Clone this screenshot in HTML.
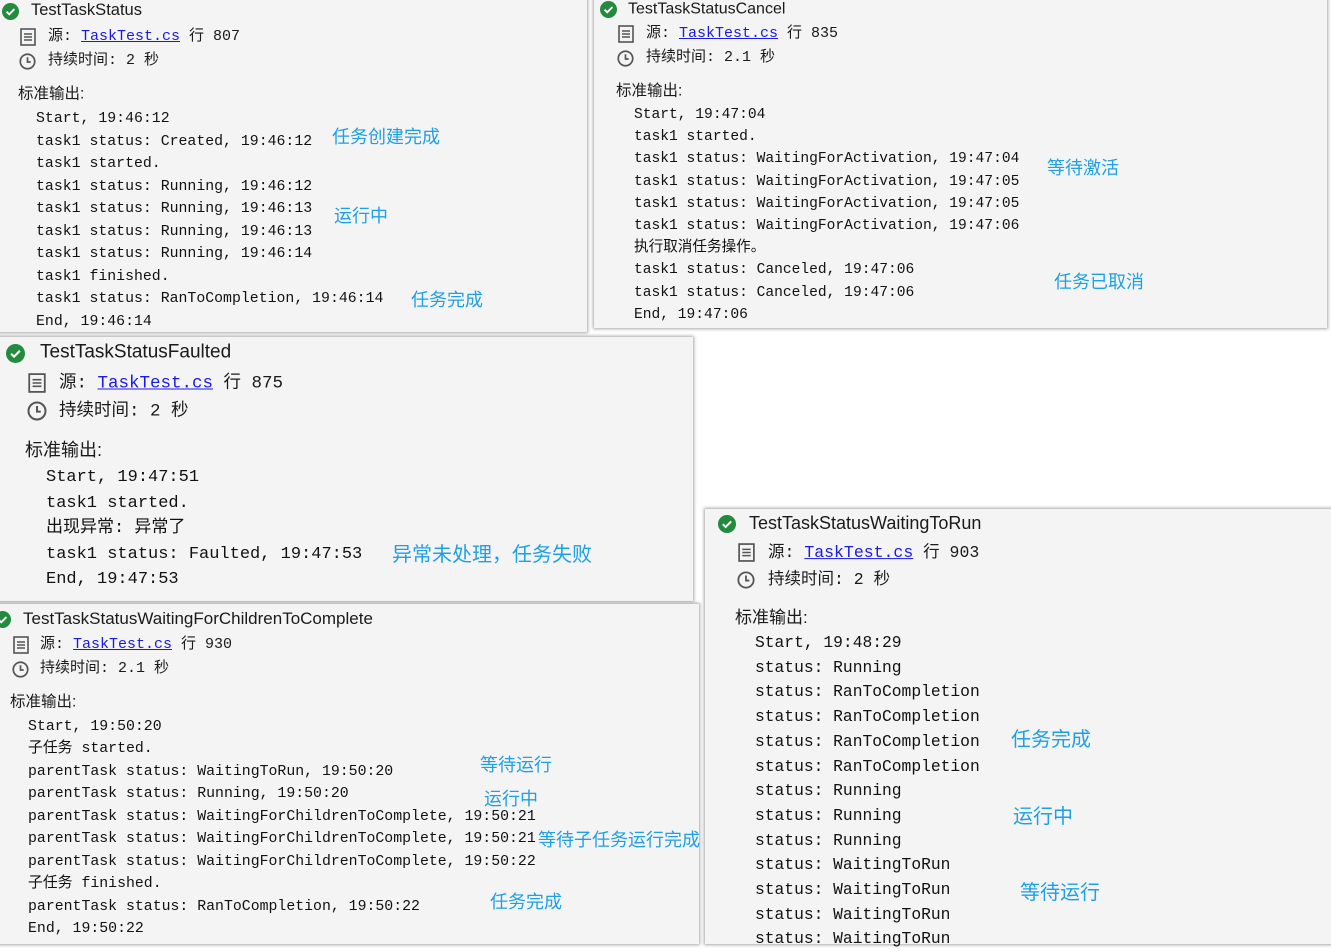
<!DOCTYPE html>
<html><head><meta charset="utf-8"><style>
*{margin:0;padding:0;box-sizing:border-box}
body{width:1331px;height:941px;background:#fff;position:relative;overflow:hidden;font-family:"Liberation Sans","Noto Sans CJK SC",sans-serif;color:#1a1a1a}
.p{position:absolute;background:#f4f4f4;box-shadow:0 0 3px 1px #a8a8a8;overflow:hidden}
.a{position:absolute;white-space:pre;line-height:1.2;transform:translateY(-50%)}
.t{font-family:"Liberation Sans","Noto Sans CJK SC",sans-serif}
.m{font-family:"Liberation Mono","Noto Sans CJK SC",monospace}
.c{position:absolute;white-space:pre;font-family:"Liberation Mono","Noto Sans CJK SC",monospace;color:#111}
.b{position:absolute;white-space:pre;color:#1ea0e6;font-family:"Noto Sans CJK SC",sans-serif;line-height:1;transform:translateY(-50%)}
a{color:#1a1ae6;text-decoration:underline}
svg{position:absolute}
</style></head><body>

<!-- Panel A -->
<div class="p" style="left:-3px;top:-3px;width:590px;height:335px"></div>
<svg style="left:2px;top:3px" width="17" height="17" viewBox="0 0 16 16"><circle cx="8" cy="8" r="8" fill="#238a3e"/><path d="M4.3 8.2l2.5 2.4 4.9-4.9" stroke="#fff" stroke-width="1.8" fill="none"/></svg>
<div class="a t" style="left:31px;top:11px;font-size:16.5px">TestTaskStatus</div>
<svg style="left:20px;top:28px" width="16" height="18" viewBox="0 0 16 18"><rect x="1" y="1" width="14" height="16" fill="none" stroke="#555" stroke-width="1.6"/><path d="M4 6h8M4 9h8M4 12h8" stroke="#555" stroke-width="1.4"/></svg>
<div class="a m" style="left:48px;top:37px;font-size:15px">源: <a>TaskTest.cs</a> 行 807</div>
<svg style="left:19px;top:53px" width="17" height="17" viewBox="0 0 16 16"><circle cx="8" cy="8" r="6.8" fill="none" stroke="#555" stroke-width="1.6"/><path d="M8 4v4.5h3" stroke="#555" stroke-width="1.6" fill="none"/></svg>
<div class="a m" style="left:48px;top:61px;font-size:15px">持续时间: 2 秒</div>
<div class="a t" style="left:18px;top:95px;font-size:15.5px">标准输出:</div>
<div class="c" style="left:36px;top:108px;font-size:14.85px;line-height:22.5px">Start, 19:46:12
task1 status: Created, 19:46:12
task1 started.
task1 status: Running, 19:46:12
task1 status: Running, 19:46:13
task1 status: Running, 19:46:13
task1 status: Running, 19:46:14
task1 finished.
task1 status: RanToCompletion, 19:46:14
End, 19:46:14</div>
<div class="b" style="left:332px;top:136px;font-size:18px">任务创建完成</div>
<div class="b" style="left:334px;top:215px;font-size:18px">运行中</div>
<div class="b" style="left:411px;top:299px;font-size:18px">任务完成</div>

<!-- Panel B -->
<div class="p" style="left:594px;top:-3px;width:733px;height:331px"></div>
<svg style="left:600px;top:1px" width="17" height="17" viewBox="0 0 16 16"><circle cx="8" cy="8" r="8" fill="#238a3e"/><path d="M4.3 8.2l2.5 2.4 4.9-4.9" stroke="#fff" stroke-width="1.8" fill="none"/></svg>
<div class="a t" style="left:628px;top:9px;font-size:16px">TestTaskStatusCancel</div>
<svg style="left:618px;top:25px" width="16" height="18" viewBox="0 0 16 18"><rect x="1" y="1" width="14" height="16" fill="none" stroke="#555" stroke-width="1.6"/><path d="M4 6h8M4 9h8M4 12h8" stroke="#555" stroke-width="1.4"/></svg>
<div class="a m" style="left:646px;top:34px;font-size:15px">源: <a>TaskTest.cs</a> 行 835</div>
<svg style="left:617px;top:50px" width="17" height="17" viewBox="0 0 16 16"><circle cx="8" cy="8" r="6.8" fill="none" stroke="#555" stroke-width="1.6"/><path d="M8 4v4.5h3" stroke="#555" stroke-width="1.6" fill="none"/></svg>
<div class="a m" style="left:646px;top:58px;font-size:15px">持续时间: 2.1 秒</div>
<div class="a t" style="left:616px;top:92px;font-size:15.5px">标准输出:</div>
<div class="c" style="left:634px;top:104px;font-size:14.6px;line-height:22.2px">Start, 19:47:04
task1 started.
task1 status: WaitingForActivation, 19:47:04
task1 status: WaitingForActivation, 19:47:05
task1 status: WaitingForActivation, 19:47:05
task1 status: WaitingForActivation, 19:47:06
执行取消任务操作。
task1 status: Canceled, 19:47:06
task1 status: Canceled, 19:47:06
End, 19:47:06</div>
<div class="b" style="left:1047px;top:167px;font-size:18px">等待激活</div>
<div class="b" style="left:1054px;top:281px;font-size:18px">任务已取消</div>

<!-- Panel C -->
<div class="p" style="left:-3px;top:337px;width:696px;height:264px"></div>
<svg style="left:6px;top:344px" width="19" height="19" viewBox="0 0 16 16"><circle cx="8" cy="8" r="8" fill="#238a3e"/><path d="M4.3 8.2l2.5 2.4 4.9-4.9" stroke="#fff" stroke-width="1.8" fill="none"/></svg>
<div class="a t" style="left:40px;top:353px;font-size:19px">TestTaskStatusFaulted</div>
<svg style="left:28px;top:373px" width="18" height="20" viewBox="0 0 16 18"><rect x="1" y="1" width="14" height="16" fill="none" stroke="#555" stroke-width="1.6"/><path d="M4 6h8M4 9h8M4 12h8" stroke="#555" stroke-width="1.4"/></svg>
<div class="a m" style="left:59px;top:384px;font-size:17.5px">源: <a>TaskTest.cs</a> 行 875</div>
<svg style="left:27px;top:401px" width="20" height="20" viewBox="0 0 16 16"><circle cx="8" cy="8" r="6.8" fill="none" stroke="#555" stroke-width="1.6"/><path d="M8 4v4.5h3" stroke="#555" stroke-width="1.6" fill="none"/></svg>
<div class="a m" style="left:59px;top:412px;font-size:17.5px">持续时间: 2 秒</div>
<div class="a t" style="left:25px;top:451px;font-size:18px">标准输出:</div>
<div class="c" style="left:46px;top:465px;font-size:17px;line-height:25.5px">Start, 19:47:51
task1 started.
出现异常: 异常了
task1 status: Faulted, 19:47:53
End, 19:47:53</div>
<div class="b" style="left:392px;top:553px;font-size:20px">异常未处理，任务失败</div>

<!-- Panel D -->
<div class="p" style="left:-3px;top:604px;width:702px;height:340px"></div>
<svg style="left:-6px;top:611px" width="17" height="17" viewBox="0 0 16 16"><circle cx="8" cy="8" r="8" fill="#238a3e"/><path d="M4.3 8.2l2.5 2.4 4.9-4.9" stroke="#fff" stroke-width="1.8" fill="none"/></svg>
<div class="a t" style="left:23px;top:619px;font-size:17px">TestTaskStatusWaitingForChildrenToComplete</div>
<svg style="left:13px;top:636px" width="16" height="18" viewBox="0 0 16 18"><rect x="1" y="1" width="14" height="16" fill="none" stroke="#555" stroke-width="1.6"/><path d="M4 6h8M4 9h8M4 12h8" stroke="#555" stroke-width="1.4"/></svg>
<div class="a m" style="left:40px;top:645px;font-size:15px">源: <a>TaskTest.cs</a> 行 930</div>
<svg style="left:12px;top:661px" width="17" height="17" viewBox="0 0 16 16"><circle cx="8" cy="8" r="6.8" fill="none" stroke="#555" stroke-width="1.6"/><path d="M8 4v4.5h3" stroke="#555" stroke-width="1.6" fill="none"/></svg>
<div class="a m" style="left:40px;top:669px;font-size:15px">持续时间: 2.1 秒</div>
<div class="a t" style="left:10px;top:703px;font-size:15.5px">标准输出:</div>
<div class="c" style="left:28px;top:716px;font-size:14.85px;line-height:22.45px">Start, 19:50:20
子任务 started.
parentTask status: WaitingToRun, 19:50:20
parentTask status: Running, 19:50:20
parentTask status: WaitingForChildrenToComplete, 19:50:21
parentTask status: WaitingForChildrenToComplete, 19:50:21
parentTask status: WaitingForChildrenToComplete, 19:50:22
子任务 finished.
parentTask status: RanToCompletion, 19:50:22
End, 19:50:22</div>
<div class="b" style="left:480px;top:764px;font-size:18px">等待运行</div>
<div class="b" style="left:484px;top:798px;font-size:18px">运行中</div>
<div class="b" style="left:538px;top:839px;font-size:18px">等待子任务运行完成</div>
<div class="b" style="left:490px;top:901px;font-size:18px">任务完成</div>

<!-- Panel E -->
<div class="p" style="left:705px;top:509px;width:630px;height:435px"></div>
<svg style="left:718px;top:515px" width="18" height="18" viewBox="0 0 16 16"><circle cx="8" cy="8" r="8" fill="#238a3e"/><path d="M4.3 8.2l2.5 2.4 4.9-4.9" stroke="#fff" stroke-width="1.8" fill="none"/></svg>
<div class="a t" style="left:749px;top:524px;font-size:18px">TestTaskStatusWaitingToRun</div>
<svg style="left:738px;top:543px" width="17" height="19" viewBox="0 0 16 18"><rect x="1" y="1" width="14" height="16" fill="none" stroke="#555" stroke-width="1.6"/><path d="M4 6h8M4 9h8M4 12h8" stroke="#555" stroke-width="1.4"/></svg>
<div class="a m" style="left:768px;top:553px;font-size:16.5px">源: <a>TaskTest.cs</a> 行 903</div>
<svg style="left:737px;top:571px" width="18" height="18" viewBox="0 0 16 16"><circle cx="8" cy="8" r="6.8" fill="none" stroke="#555" stroke-width="1.6"/><path d="M8 4v4.5h3" stroke="#555" stroke-width="1.6" fill="none"/></svg>
<div class="a m" style="left:768px;top:580px;font-size:16.5px">持续时间: 2 秒</div>
<div class="a t" style="left:735px;top:618px;font-size:17px">标准输出:</div>
<div class="c" style="left:755px;top:631px;font-size:16.3px;line-height:24.7px">Start, 19:48:29
status: Running
status: RanToCompletion
status: RanToCompletion
status: RanToCompletion
status: RanToCompletion
status: Running
status: Running
status: Running
status: WaitingToRun
status: WaitingToRun
status: WaitingToRun
status: WaitingToRun</div>
<div class="b" style="left:1011px;top:738px;font-size:20px">任务完成</div>
<div class="b" style="left:1013px;top:815px;font-size:20px">运行中</div>
<div class="b" style="left:1020px;top:891px;font-size:20px">等待运行</div>

</body></html>
